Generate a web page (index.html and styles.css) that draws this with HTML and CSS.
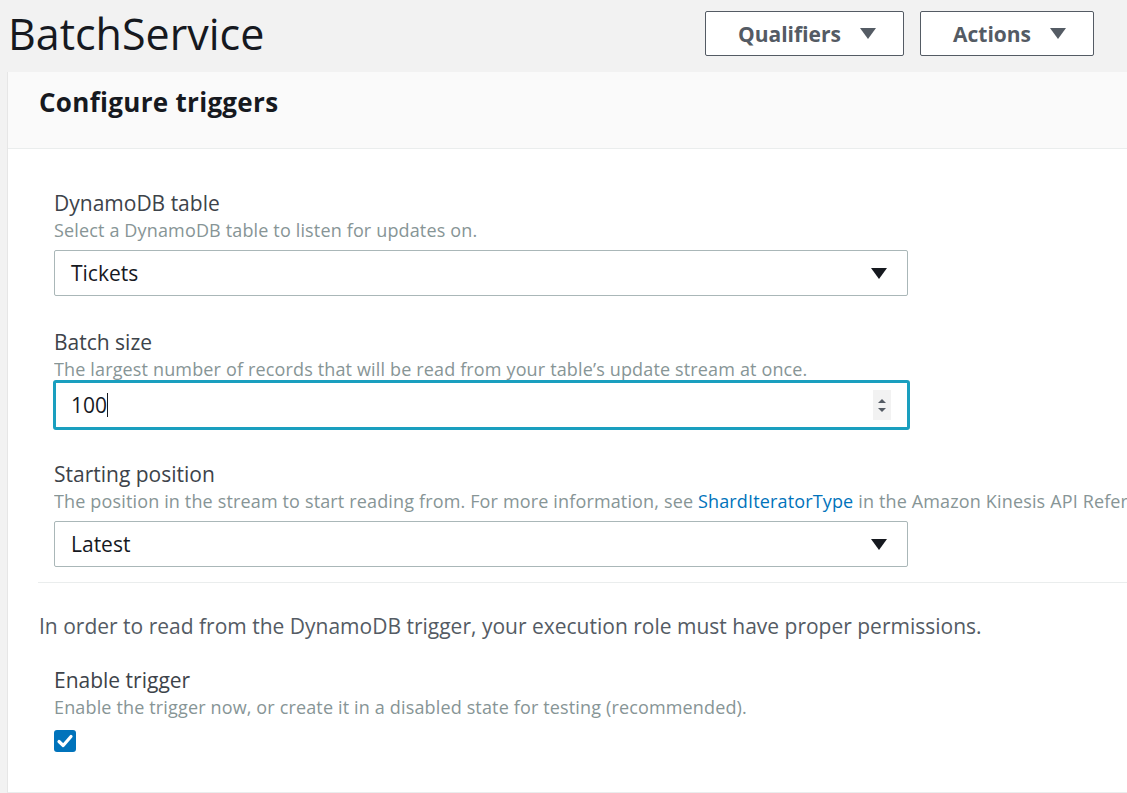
FILE: index.html
```html
<!DOCTYPE html>
<html>
<head>
<meta charset="utf-8">
<link rel="stylesheet" href="styles.css">
</head>
<body>
<header class="topbar">
  <h1 class="title">BatchService</h1>
  <div class="actions">
    <button class="btn btn-qual">Qualifiers <span class="caret-dn"></span></button>
    <button class="btn btn-act">Actions <span class="caret-dn"></span></button>
  </div>
</header>
<section class="panel">
  <div class="panel-head"><h2>Configure triggers</h2></div>
  <div class="panel-body">
    <div class="fields">
      <div class="field">
        <div class="label">DynamoDB table</div>
        <div class="desc">Select a DynamoDB table to listen for updates on.</div>
        <div class="select"><span>Tickets</span><span class="tri"></span></div>
      </div>
      <div class="field">
        <div class="label">Batch size</div>
        <div class="desc desc-tight">The largest number of records that will be read from your table’s update stream at once.</div>
        <div class="input focus"><span class="val">100</span><span class="cursor"></span>
          <span class="spin"><span class="up"></span><span class="down"></span></span>
        </div>
      </div>
      <div class="field">
        <div class="label">Starting position</div>
        <div class="desc">The position in the stream to start reading from. For more information, see <a href="#">ShardIteratorType</a> in the Amazon Kinesis API Reference.</div>
        <div class="select"><span>Latest</span><span class="tri"></span></div>
      </div>
    </div>
    <div class="divider"></div>
    <p class="note">In order to read from the DynamoDB trigger, your execution role must have proper permissions.</p>
    <div class="fields">
      <div class="field">
        <div class="label">Enable trigger</div>
        <div class="desc">Enable the trigger now, or create it in a disabled state for testing (recommended).</div>
        <div class="check"><svg width="22" height="22" viewBox="0 0 22 22"><path d="M5 11.5 L9.2 15.5 L17 6.5" fill="none" stroke="#fff" stroke-width="3.2" stroke-linecap="round" stroke-linejoin="round"/></svg></div>
      </div>
    </div>
  </div>
</section>
</body>
</html>
```
FILE: styles.css
```css
* { box-sizing: border-box; }
html, body { margin: 0; padding: 0; }
body {
  background: #f2f2f2;
  font-family: "Open Sans", "Noto Sans", sans-serif;
  color: #16191f;
  width: 1127px;
  height: 793px;
  overflow: hidden;
}
.topbar {
  height: 72px;
  display: flex;
  align-items: flex-start;
  justify-content: space-between;
  padding: 0 33px 0 8px;
}
.title {
  margin: 0;
  font-weight: 400;
  font-size: 43px;
  line-height: 68px;
  letter-spacing: 0;
  color: #16191f;
}
.actions { display: flex; gap: 16px; padding-top: 11px; }
.btn {
  height: 45px;
  background: #fff;
  border: 1px solid #545b64;
  border-radius: 2px;
  font-family: inherit;
  font-size: 21px;
  font-weight: 700;
  color: #545b64;
  display: flex;
  align-items: center;
  padding: 0 0 0 32px;
}
.btn-qual { width: 199px; }
.btn-act { width: 174px; }
.caret-dn {
  width: 0; height: 0;
  border-left: 8px solid transparent;
  border-right: 8px solid transparent;
  border-top: 11px solid #545b64;
  margin-left: 19px;
}
.panel {
  margin-left: 7px;
  width: 1120px;
  background: #fff;
  border-left: 1px solid #e6e6e6;
  height: 721px;
  border-bottom: 1px solid #eaeded;
}
.panel-head {
  height: 77px;
  background: #fafafa;
  border-bottom: 1px solid #eaeded;
  padding-left: 31px;
}
.panel-head h2 {
  margin: 0;
  font-size: 26px;
  font-weight: 700;
  line-height: 60px;
  letter-spacing: 0.3px;
}
.panel-body { padding: 40px 0 0 30px; }
.fields { padding-left: 16px; display: flex; flex-direction: column; gap: 32px; }
.label {
  font-size: 21px;
  line-height: 28px;
  color: #3d434a;
}
.desc {
  font-size: 18px;
  line-height: 26px;
  color: #879596;
  margin-bottom: 7px;
  letter-spacing: 0.15px;
  white-space: nowrap;
  overflow: hidden;
}
.desc-tight { margin-bottom: 0; }
.desc a { color: #0073bb; text-decoration: none; }
.select, .input {
  width: 854px;
  height: 46px;
  border: 1px solid #aab7b8;
  border-radius: 2px;
  display: flex;
  align-items: center;
  padding: 0 20px 0 16px;
  font-size: 21px;
  color: #16191f;
  background: #fff;
}
.select { justify-content: space-between; }
.tri {
  width: 0; height: 0;
  border-left: 8px solid transparent;
  border-right: 8px solid transparent;
  border-top: 11px solid #16191f;
}
.input.focus {
  width: 857px;
  height: 50px;
  margin: -2px 0 -2px -1px;
  border: 3px solid #1a9fbf;
  border-radius: 3px;
  padding-left: 15px;
  padding-right: 16px;
}
.cursor { width: 1px; height: 24px; background: #16191f; }
.spin {
  margin-left: auto;
  width: 18px;
  height: 30px;
  background: #f2f2f2;
  display: flex;
  flex-direction: column;
  align-items: center;
  justify-content: center;
  gap: 5px;
}
.spin .up {
  border-left: 4px solid transparent;
  border-right: 4px solid transparent;
  border-bottom: 4px solid #545b64;
}
.spin .down {
  border-left: 4px solid transparent;
  border-right: 4px solid transparent;
  border-top: 4px solid #545b64;
}
.divider {
  height: 1px;
  background: #eaeded;
  margin: 15px 0 0 0;
}
.note {
  margin: 29px 0 26px 1px;
  font-size: 21px;
  line-height: 28px;
  color: #545b64;
}
.check {
  width: 22px;
  height: 22px;
  background: #0073bb;
  border-radius: 3px;
  margin-top: 10px;
}
.check svg { display: block; }
```
